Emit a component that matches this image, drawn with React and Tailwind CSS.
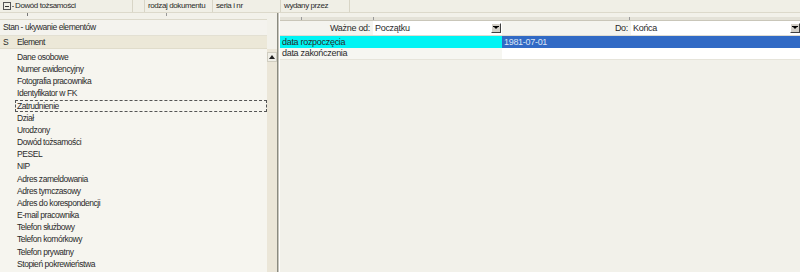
import React from "react";

const items = [
  "Dane osobowe",
  "Numer ewidencyjny",
  "Fotografia pracownika",
  "Identyfikator w FK",
  "Zatrudnienie",
  "Dział",
  "Urodzony",
  "Dowód tożsamości",
  "PESEL",
  "NIP",
  "Adres zameldowania",
  "Adres tymczasowy",
  "Adres do korespondencji",
  "E-mail pracownika",
  "Telefon służbowy",
  "Telefon komórkowy",
  "Telefon prywatny",
  "Stopień pokrewieństwa",
];

const DropBtn = () => (
  <div className="w-[10px] h-[10px] bg-[#d4d0c8] border border-t-white border-l-white border-r-[#404040] border-b-[#404040] flex items-center justify-center">
    <svg width="6" height="4" viewBox="0 0 6 4">
      <path d="M0 0h6L3 3z" fill="#000" />
      <rect x="0" y="0" width="6" height="1" fill="#000" />
    </svg>
  </div>
);

const HeaderCell = ({ w, children }) => (
  <div className={`${w} h-full border-r border-[#d8d5c6] flex items-center px-[3px] whitespace-nowrap overflow-hidden`}>
    {children}
  </div>
);

export default function App() {
  return (
    <div
      className="w-[800px] h-[272px] overflow-hidden bg-[#f2f1ea] text-[8.5px] tracking-[-0.45px] text-[#2a2a2a] leading-none"
      style={{ fontFamily: '"Liberation Sans", Arial, sans-serif' }}
    >
      {/* top grid row */}
      <div className="h-[13px] flex bg-[#f0efe6] border-b border-[#dcd9cb] text-[8px] tracking-[-0.4px]">
        <HeaderCell w="w-[133px]">
          <span className="w-[8px] h-[8px] border border-[#555] flex items-center justify-center mr-[1px]">
            <span className="w-[4px] h-px bg-[#333]" />
          </span>
          <span className="w-[2px] h-px bg-[#777] mr-[1px]" />
          Dowód tożsamości
        </HeaderCell>
        <HeaderCell w="w-[12px]" />
        <HeaderCell w="w-[68px]">rodzaj dokumentu</HeaderCell>
        <HeaderCell w="w-[68px]">seria i nr</HeaderCell>
        <HeaderCell w="w-[69px]">wydany przez</HeaderCell>
        <div className="flex-1" />
      </div>

      <div className="flex h-[259px]">
        {/* left panel */}
        <div className="w-[267px] flex flex-col">
          <div className="h-[7px] relative border-b border-[#dcd9cb]">
            <span className="absolute left-[27px] top-0 w-px h-[3px] bg-[#777]" />
            <span className="absolute left-[166px] top-0 w-px h-[3px] bg-[#999]" />
          </div>
          <div className="h-[16px] flex items-center px-[3px] bg-[#f4f3ee] border-b border-[#e3e0d3]">
            Stan - ukywanie elementów
          </div>
          <div className="h-[13px] flex items-center bg-[#ece8d8] border-b border-[#e0dccb]">
            <span className="w-[17px] pl-[3px]">S</span>
            <span>Element</span>
          </div>
          <div className="flex-1 bg-[#f6f5ef] pt-[2px]">
            {items.map((t) => (
              <div
                key={t}
                className={`h-[12.18px] flex items-center ${
                  t === "Zatrudnienie"
                    ? "ml-[15px] pl-[1px] border border-dashed border-[#555]"
                    : "pl-[17px]"
                }`}
              >
                {t}
              </div>
            ))}
          </div>
        </div>
        <div className="w-[10px] flex flex-col">
          <div className="h-[36px]" />
          <div className="flex-1 bg-[#ebe6d8] pt-[3px]">
            <div className="w-[10px] h-[10px] bg-[#f0efe8] border border-[#d0cdc0] flex items-center justify-center">
              <svg width="6" height="4" viewBox="0 0 6 4">
                <path d="M3 0L6 4H0z" fill="#222" />
              </svg>
            </div>
          </div>
        </div>
        <div className="w-[3px] flex">
          <div className="w-px bg-[#8a8a80]" />
          <div className="w-px bg-[#c8c6bc]" />
          <div className="w-px bg-white" />
        </div>

        {/* right panel */}
        <div className="flex-1 flex flex-col text-[9px] tracking-[-0.3px]">
          <div className="h-[4px]" />
          <div className="h-[4px] relative bg-[#e4e2d8] border-b border-[#c9c6b9]">
            <span className="absolute left-[21px] top-0 w-px h-[3px] bg-[#999]" />
            <span className="absolute left-[93px] top-0 w-px h-[3px] bg-[#999]" />
            <span className="absolute left-[349px] top-0 w-px h-[3px] bg-[#999]" />
          </div>
          <div className="h-[15px] flex bg-[#f4f4ef] border-b border-[#dedcd2]">
            <div className="w-[222px] flex items-center">
              <span className="w-[93px] text-right pr-[3px]">Ważne od:</span>
              <div className="flex-1 h-full bg-white flex items-center pl-[2px] pr-[1px]">
                <span className="flex-1">Początku</span>
                <DropBtn />
              </div>
            </div>
            <div className="flex-1 flex items-center">
              <span className="w-[129px] text-right pr-[3px]">Do:</span>
              <div className="flex-1 h-full bg-white flex items-center pl-[2px]">
                <span className="flex-1">Końca</span>
                <DropBtn />
              </div>
            </div>
          </div>
          <div className="h-[12px] flex">
            <div className="w-[222px] bg-[#00f4f4] flex items-center pl-[2px]">data rozpoczęcia</div>
            <div className="flex-1 bg-[#316ac5] text-[#dbe4f5] flex items-center pl-[2px]">1981-07-01</div>
          </div>
          <div className="h-[12px] flex border-b border-[#e6e4da]">
            <div className="w-[222px] bg-[#f6f6f1] flex items-center pl-[2px]">data zakończenia</div>
            <div className="flex-1 bg-white" />
          </div>
        </div>
      </div>
    </div>
  );
}
